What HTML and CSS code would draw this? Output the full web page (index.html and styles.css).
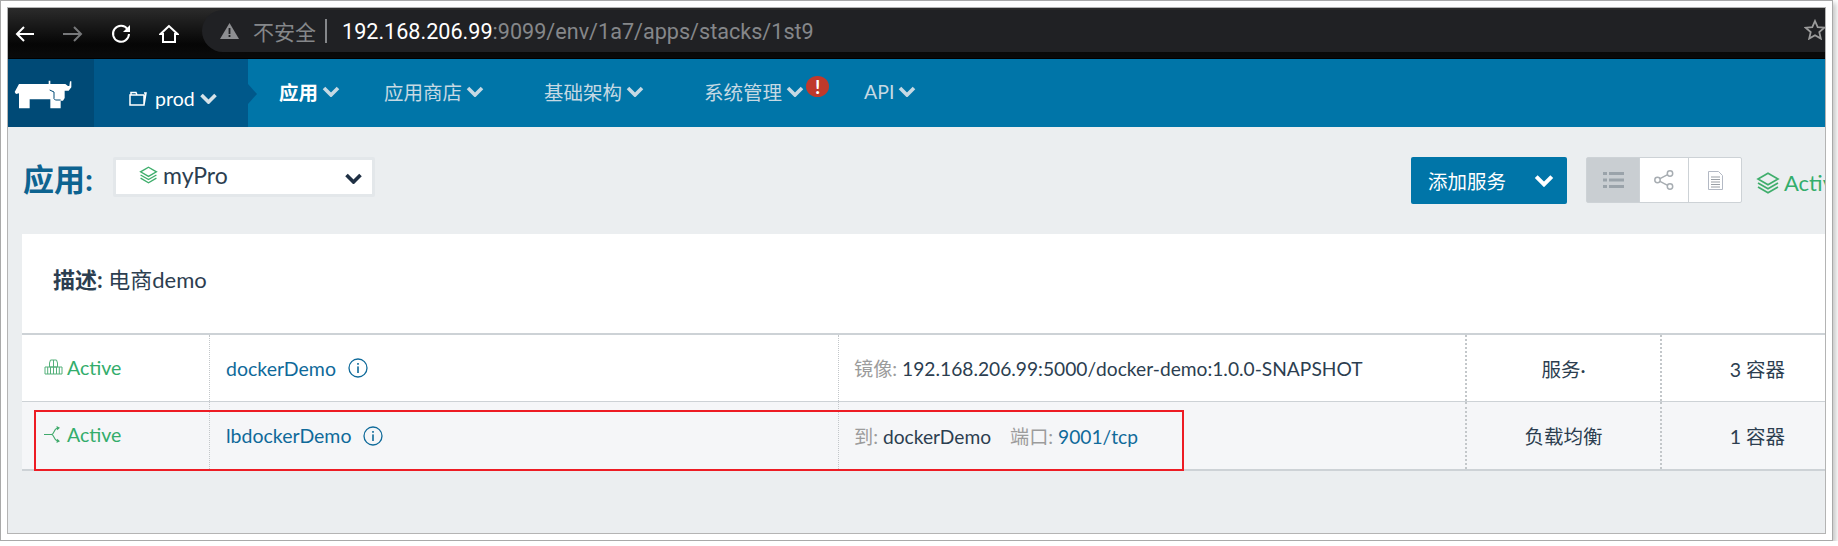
FILE: index.html
```html
<!DOCTYPE html>
<html lang="zh">
<head>
    <meta charset="UTF-8">
    <title>Rancher - myPro</title>
    <link rel="stylesheet" href="styles.css">
</head>
<body>
<svg class="defs" width="0" height="0">
    <symbol id="chev" viewBox="0 0 18 11"><path d="M2 2l7 7 7-7" fill="none" stroke="currentColor" stroke-width="3.6"/></symbol>
    <symbol id="layers" viewBox="0 0 24 22"><g fill="none" stroke="currentColor" stroke-width="1.7"><path d="M12 1.200l10 5.800-10 5.800L2 7z"/><path d="M2 11l10 5.800L22 11"/><path d="M2 15l10 5.800L22 15"/></g></symbol>
    <symbol id="info" viewBox="0 0 20 20"><circle cx="10" cy="10" r="9" fill="none" stroke="currentColor" stroke-width="1.3"/><rect x="9.2" y="8.4" width="1.6" height="6.6" fill="currentColor"/><rect x="9.2" y="5" width="1.6" height="1.8" fill="currentColor"/></symbol>
</svg>
<div id="shot">
<div id="window">
    <div id="chrome">
        <div class="tools">
            <svg class="tool t-back" width="20" height="20" viewBox="0 0 20 20"><path d="M19 10H2M9 3l-7 7 7 7" fill="none" stroke="#fff" stroke-width="2"/></svg>
            <svg class="tool t-fwd" width="21" height="20" viewBox="0 0 21 20"><path d="M1 10h17M12 3l7 7-7 7" fill="none" stroke="#77787a" stroke-width="2"/></svg>
            <svg class="tool t-reload" width="20" height="20" viewBox="0 0 20 20"><path d="M16.6 5.2A8 8 0 1 0 18 10" fill="none" stroke="#fff" stroke-width="2"/><path d="M19 1v7h-7z" fill="#fff"/></svg>
            <svg class="tool t-home" width="20" height="20" viewBox="0 0 20 20"><path d="M10 2L1.500 10H4v8h12v-8h2.500z" fill="none" stroke="#fff" stroke-width="2"/></svg>
        </div>
        <div class="omnibox">
            <svg class="warn" width="19" height="16" viewBox="0 0 19 16"><path d="M9.500 0L19 16H0z" fill="#8d8e91"/><path d="M8.600 5h1.800v6H8.600zM8.600 12h1.800v2H8.600z" fill="#202124"/></svg>
            <span class="insecure">不安全</span>
            <span class="sep"></span>
            <span class="host">192.168.206.99</span><span class="path">:9099/env/1a7/apps/stacks/1st9</span>
            <svg class="star" width="22" height="21" viewBox="0 0 22 21"><path d="M11 2l2.700 6.100 6.600.6-5 4.400 1.500 6.500L11 16.200 5.200 19.600l1.500-6.500-5-4.400 6.600-.6z" fill="none" stroke="#9b9b9b" stroke-width="1.800"/></svg>
        </div>
    </div>

    <div id="nav">
        <div class="logo">
            <svg width="80" height="50" viewBox="0 0 240 150"><path d="M20 66L33 42H122V32H127V42H172L180 48H184L186 34H190V52L182 62H170V84L165 92H158V115H127V88H65V115H33V70L24 72z" fill="#fff"/><path d="M125 60L138 66V86L142 90H158" fill="none" stroke="#004a76" stroke-width="3"/></svg>
        </div>
        <div class="env">
            <svg width="18" height="15" viewBox="0 0 18 15"><path d="M1 4h14v10H1zM2 4V1.500h5L8 4M15 2l2 0-2 12" fill="none" stroke="#fff" stroke-width="1.500"/></svg>
            <span class="env-name">prod</span>
            <svg class="chev" width="19" height="11"><use href="#chev"/></svg>
        </div>
        <ul class="menu">
            <li class="active first"><span>应用</span><svg class="chev" width="18" height="11"><use href="#chev"/></svg></li>
            <li><span>应用商店</span><svg class="chev" width="18" height="11"><use href="#chev"/></svg></li>
            <li><span>基础架构</span><svg class="chev" width="18" height="11"><use href="#chev"/></svg></li>
            <li class="alerted"><span>系统管理</span><svg class="chev" width="18" height="11"><use href="#chev"/></svg><b class="badge">!</b></li>
            <li><span>API</span><svg class="chev" width="18" height="11"><use href="#chev"/></svg></li>
        </ul>
    </div>

    <div id="content">
        <div class="page-head">
            <h1>应用:</h1>
            <div class="select">
                <svg class="green" width="19" height="18"><use href="#layers"/></svg>
                <span class="select-name">myPro</span>
                <svg class="select-chev" width="19" height="11"><use href="#chev"/></svg>
            </div>
            <div class="actions">
                <div class="add-btn"><span>添加服务</span><svg width="20" height="13"><use href="#chev"/></svg></div>
                <div class="view-group">
                    <div class="view-btn on">
                        <svg width="21" height="18" viewBox="0 0 21 18"><path d="M0 1h4v3H0zM6 1h15v3H6zM0 7.500h4v3H0zM6 7.500h15v3H6zM0 14h4v3H0zM6 14h15v3H6z" fill="#9aa3aa"/></svg>
                    </div>
                    <div class="view-btn share">
                        <svg width="20" height="20" viewBox="0 0 20 20"><g fill="none" stroke="#a7adb2" stroke-width="1.500"><circle cx="3.500" cy="10" r="2.700"/><circle cx="16" cy="3.500" r="2.700"/><circle cx="16" cy="16.500" r="2.700"/><path d="M6 8.700l7.600-4M6 11.300l7.600 4"/></g></svg>
                    </div>
                    <div class="view-btn doc">
                        <svg width="15" height="19" viewBox="0 0 15 19"><path d="M.5.500h10l4 4v14H.500z" fill="#fff" stroke="#b3b9c4"/><path d="M3 6h9M3 8.500h9M3 11h9M3 13.500h9M3 16h9" stroke="#9a9fa5"/></svg>
                    </div>
                </div>
                <div class="state">
                    <svg class="green" width="24" height="22"><use href="#layers"/></svg>
                    <span>Active</span>
                </div>
            </div>
        </div>

        <div class="panel">
            <div class="desc"><strong>描述:</strong> 电商demo</div>
            <div class="rows">
                <div class="row">
                    <div class="cell c-state">
                        <svg width="19" height="16" viewBox="0 0 19 16"><g fill="none" stroke="#54b07a" stroke-width="1"><path d="M6.500 1h6l1 3v4h-8V4zM9.500 1v7"/><path d="M1 8h5.500v7H1zM6.500 8H12.500v7H6.500zM12.500 8H18v7h-5.500zM3.700 8v7M9.500 8v7M15.300 8v7"/></g></svg>
                        <span>Active</span>
                    </div>
                    <div class="cell c-name"><a>dockerDemo</a><svg class="info" width="20" height="20"><use href="#info"/></svg></div>
                    <div class="cell c-detail"><div><span class="lbl">镜像:</span> 192.168.206.99:5000/docker-demo:1.0.0-SNAPSHOT</div></div>
                    <div class="cell c-kind">服务·</div>
                    <div class="cell c-count">3 容器</div>
                </div>
                <div class="row alt">
                    <div class="cell c-state">
                        <svg width="19" height="17" viewBox="0 0 19 17"><g fill="none" stroke="#3fa96b" stroke-width="1.200"><path d="M0 8.500h7.500c3 0 1.500-5 6-6.500M7.500 8.500c3 0 1.500 5 6 6.500"/></g><path d="M12.500 0l3.500 1.800-2.800 2.400zM12.500 17l3.500-1.800-2.800-2.400z" fill="#3fa96b"/></svg>
                        <span>Active</span>
                    </div>
                    <div class="cell c-name"><a>lbdockerDemo</a><svg class="info" width="20" height="20"><use href="#info"/></svg></div>
                    <div class="cell c-detail"><div><span class="lbl">到:</span> dockerDemo <span class="lbl port">端口:</span> <a>9001/tcp</a></div></div>
                    <div class="cell c-kind">负载均衡</div>
                    <div class="cell c-count">1 容器</div>
                </div>
            </div>
        </div>
        <div class="callout"></div>
    </div>
</div>
</div>
</body>
</html>
```

FILE: styles.css
```css
body {
    margin: 0;
    background-color: #ffffff;
    font-family: Lato, "Noto Sans CJK SC", sans-serif;
    color: #2c3e50;
}
.defs {
    position: absolute;
}
#shot {
    width: 1833px;
    height: 541px;
    box-sizing: border-box;
    padding: 6px;
    background-color: #ffffff;
    border: 1px solid #a9a9a9;
    box-shadow: 3px 3px 5px rgba(0,0,0,0.22);
}
#window {
    height: 100%;
    box-sizing: border-box;
    border: 1px solid #b4b4b4;
    background-color: #ebeef0;
    overflow: hidden;
    display: flex;
    flex-direction: column;
}

/* browser bar */
#chrome {
    height: 51px;
    flex: none;
    box-sizing: border-box;
    display: flex;
    padding-top: 2px;
    background: linear-gradient(#2b2b2b, #060606 36px, #0a0a0a);
    border-bottom: 1px solid #000000;
}
.tools {
    width: 194px;
    flex: none;
    display: flex;
    align-items: flex-start;
    padding: 14px 0 0 7px;
    box-sizing: border-box;
}
.t-fwd { margin-left: 27px; }
.t-reload { margin-left: 28px; }
.t-home { margin-left: 28px; }
.omnibox {
    flex: 1;
    height: 42px;
    display: flex;
    align-items: center;
    position: relative;
    padding-left: 18px;
    background-color: #202124;
    border-radius: 21px 0 0 21px;
    font-family: Roboto, "Noto Sans CJK SC", sans-serif;
    font-size: 21.600px;
}
.insecure {
    margin-left: 14px;
    color: #85878a;
    font-size: 21px;
}
.sep {
    width: 2px;
    height: 24px;
    margin: 0 15px 0 9px;
    background-color: #85878a;
}
.host {
    color: #ffffff;
}
.path {
    color: #85878a;
}
.star {
    position: absolute;
    right: -1px;
    top: 9px;
}

/* rancher nav */
#nav {
    height: 68px;
    flex: none;
    display: flex;
    background-color: #0075a8;
    color: #c6d9e3;
    font-size: 19.500px;
}
.logo {
    width: 86px;
    flex: none;
    box-sizing: border-box;
    padding-top: 11px;
    background-color: #004a76;
}
.env {
    width: 154px;
    flex: none;
    box-sizing: border-box;
    position: relative;
    display: flex;
    align-items: center;
    padding: 10px 0 0 35px;
    background-color: #00588a;
    color: #ffffff;
}
.env:after {
    content: "";
    position: absolute;
    left: 100%;
    top: 25px;
    border-left: 9px solid #00588a;
    border-top: 10px solid transparent;
    border-bottom: 10px solid transparent;
}
.env-name {
    margin: 0 4px 0 8px;
}
.env .chev {
    color: #d6e2e9;
}
.menu {
    list-style-type: none;
    margin: 0;
    padding: 0 0 0 31px;
    display: flex;
    align-items: center;
    height: 65px;
}
.menu li {
    display: flex;
    align-items: center;
    position: relative;
    padding-right: 60px;
}
.menu li.first {
    padding-right: 44px;
}
.menu li.active {
    color: #ffffff;
    font-weight: bold;
}
.menu .chev {
    margin-left: 4px;
    color: #c6d9e3;
}
.badge {
    position: absolute;
    left: 102px;
    top: -1px;
    width: 23px;
    height: 21px;
    border-radius: 50%;
    background-color: #c0392b;
    color: #ffffff;
    font-size: 19px;
    line-height: 21px;
    text-align: center;
}

/* page */
#content {
    flex: 1;
    position: relative;
}
.page-head {
    height: 107px;
    box-sizing: border-box;
    padding: 30px 0 0 15px;
    display: flex;
    align-items: flex-start;
}
h1 {
    margin: 4px 0 0 0;
    width: 90px;
    flex: none;
    font-size: 31px;
    line-height: 36px;
    color: #0d6390;
}
.select {
    width: 262px;
    height: 40px;
    flex: none;
    box-sizing: border-box;
    display: flex;
    align-items: center;
    padding: 0 9px 4px 23px;
    background-color: #ffffff;
    border: 3px solid #e3e7ea;
    border-radius: 2px;
}
.select-name {
    margin-left: 5px;
    font-size: 23px;
}
.select-chev {
    margin-left: auto;
    margin-top: 6px;
    color: #1f3044;
}
.green {
    color: #3fae6c;
}
.actions {
    margin-left: 1036px;
    display: flex;
    align-items: flex-start;
    flex: none;
}
.add-btn {
    width: 156px;
    height: 47px;
    box-sizing: border-box;
    display: flex;
    align-items: center;
    justify-content: space-between;
    padding: 0 13px 0 17px;
    background-color: #0075a8;
    border-radius: 2px;
    color: #ffffff;
    font-size: 19.500px;
}
.add-btn svg {
    color: #ffffff;
}
.view-group {
    margin-left: 19px;
    height: 46px;
    display: flex;
    box-sizing: border-box;
    border: 1px solid #cdd2d6;
    border-radius: 2px;
    background-color: #ffffff;
}
.view-btn {
    width: 52px;
    display: flex;
    align-items: center;
    justify-content: center;
    border-left: 1px solid #cdd2d6;
}
.view-btn.on {
    border-left: none;
    background-color: #c9ced2;
}
.view-btn.share {
    width: 48px;
}
.state {
    margin: 12px 0 0 14px;
    display: flex;
    align-items: center;
    color: #33ad6b;
    font-size: 22px;
}
.state span {
    margin-left: 4px;
}

.panel {
    margin-left: 14px;
    background-color: #ffffff;
}
.desc {
    height: 101px;
    box-sizing: border-box;
    padding: 31px 0 0 31px;
    font-size: 22px;
    line-height: 30px;
    border-bottom: 2px solid #cdd2d6;
}
.rows {
    border-bottom: 2px solid #cdd2d6;
}
.row {
    display: grid;
    grid-template-columns: 187px 629px 627px 195px 165px;
    height: 66px;
    font-size: 19.500px;
}
.row + .row {
    height: 67px;
    border-top: 1px solid #cdd2d6;
}
.row.alt {
    background-color: #f5f6f8;
}
.cell {
    display: flex;
    align-items: center;
    white-space: pre;
    border-left: 1px dotted #c3c7ca;
}
.c-state {
    border-left: none;
    padding: 0 0 2px 22px;
    color: #33ad6b;
}
.c-state span {
    margin-left: 4px;
}
.c-name {
    padding-left: 16px;
}
.c-name a {
    color: #0f6a9a;
}
.info {
    margin-left: 12px;
    color: #0f6a9a;
}
.c-detail {
    padding-left: 15px;
    font-size: 19.200px;
}
.c-detail a {
    color: #0f6a9a;
}
.lbl {
    color: #9c9c9c;
}
.port {
    margin-left: 14px;
}
.c-kind {
    justify-content: center;
    border-left: 2px dotted #c3c7ca;
}
.c-count {
    justify-content: flex-end;
    padding-right: 40px;
    border-left: 2px dotted #c3c7ca;
}
.callout {
    position: absolute;
    left: 26px;
    top: 283px;
    width: 1146px;
    height: 57px;
    border: 2px solid #ed1c24;
}
```
